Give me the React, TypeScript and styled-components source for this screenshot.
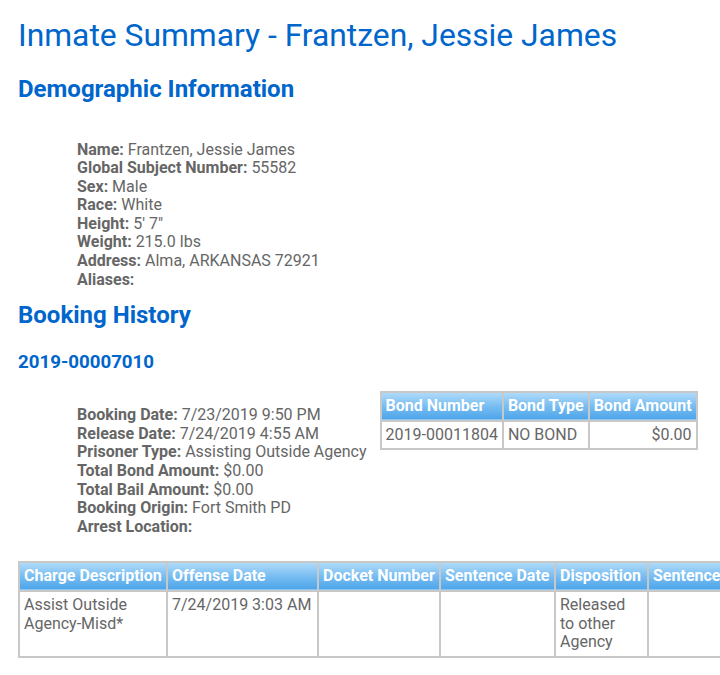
import React from "react";
import styled, { createGlobalStyle } from "styled-components";

const GlobalStyle = createGlobalStyle`
  html, body {
    margin: 0;
    padding: 0;
    background: #ffffff;
    overflow-x: hidden;
  }
  body {
    font-family: Roboto, "Liberation Sans", Arial, sans-serif;
    color: #666666;
  }
`;

const Page = styled.div`
  padding: 17px 0 40px 18px;
  width: 780px;
`;

const Title = styled.h1`
  margin: 0 0 20px 0;
  font-size: 31.8px;
  font-weight: 400;
  line-height: 37.5px;
  color: #0066cc;
`;

const SectionTitle = styled.h2<{ $top?: number }>`
  margin: ${(p) => p.$top ?? 0}px 0 0 0;
  font-size: 24px;
  font-weight: 700;
  line-height: 28px;
  color: #0066cc;
`;

const BookingNumber = styled.h3`
  margin: 22px 0 0 0;
  font-size: 18.7px;
  font-weight: 700;
  line-height: 22px;
  color: #0066cc;
`;

const InfoList = styled.div<{ $top: number }>`
  padding: ${(p) => p.$top}px 0 0 59px;
  font-size: 16px;
  line-height: 18.6px;
  white-space: nowrap;
`;

const InfoRow = styled.div``;

const Label = styled.b`
  font-weight: 700;
`;

const BookingRow = styled.div`
  display: flex;
  align-items: flex-start;
  gap: 13px;
  margin-top: 18px;
`;

const Grid = styled.table`
  border-collapse: separate;
  border-spacing: 2px;
  background: #c8c8c8;
  font-size: 16px;
  line-height: 18.6px;
  color: #666666;
`;

const HeadCell = styled.th<{ $w?: number }>`
  background: linear-gradient(to bottom, #aedaf9 0%, #74bbf1 55%, #4ea5ea 100%);
  border-bottom: 1px solid #8cc6f3;
  color: #ffffff;
  font-weight: 700;
  text-align: left;
  white-space: nowrap;
  padding: 4px 4px 3px 4px;
  width: ${(p) => (p.$w ? `${p.$w}px` : "auto")};
  box-sizing: border-box;
`;

const Cell = styled.td<{ $align?: "left" | "right" }>`
  background: #ffffff;
  vertical-align: top;
  text-align: ${(p) => p.$align ?? "left"};
  padding: 4px 4px;
`;

const NarrowText = styled.div<{ $max: number }>`
  max-width: ${(p) => p.$max}px;
`;

const ChargeWrap = styled.div`
  margin-top: 25px;
`;

const demographics: [string, string][] = [
  ["Name:", "Frantzen, Jessie James"],
  ["Global Subject Number:", "55582"],
  ["Sex:", "Male"],
  ["Race:", "White"],
  ["Height:", "5' 7\""],
  ["Weight:", "215.0 lbs"],
  ["Address:", "Alma, ARKANSAS 72921"],
  ["Aliases:", ""],
];

const booking: [string, string][] = [
  ["Booking Date:", "7/23/2019 9:50 PM"],
  ["Release Date:", "7/24/2019 4:55 AM"],
  ["Prisoner Type:", "Assisting Outside Agency"],
  ["Total Bond Amount:", "$0.00"],
  ["Total Bail Amount:", "$0.00"],
  ["Booking Origin:", "Fort Smith PD"],
  ["Arrest Location:", ""],
];

export default function App() {
  return (
    <>
      <GlobalStyle />
      <Page>
        <Title>Inmate Summary - Frantzen, Jessie James</Title>
        <SectionTitle>Demographic Information</SectionTitle>
        <InfoList $top={38}>
          {demographics.map(([l, v]) => (
            <InfoRow key={l}>
              <Label>{l}</Label> {v}
            </InfoRow>
          ))}
        </InfoList>
        <SectionTitle $top={12}>Booking History</SectionTitle>
        <BookingNumber>2019-00007010</BookingNumber>
        <BookingRow>
          <InfoList $top={15}>
            {booking.map(([l, v]) => (
              <InfoRow key={l}>
                <Label>{l}</Label> {v}
              </InfoRow>
            ))}
          </InfoList>
          <Grid>
            <thead>
              <tr>
                <HeadCell>Bond Number</HeadCell>
                <HeadCell>Bond Type</HeadCell>
                <HeadCell>Bond Amount</HeadCell>
              </tr>
            </thead>
            <tbody>
              <tr>
                <Cell>2019-00011804</Cell>
                <Cell>NO BOND</Cell>
                <Cell $align="right">$0.00</Cell>
              </tr>
            </tbody>
          </Grid>
        </BookingRow>
        <ChargeWrap>
          <Grid>
            <thead>
              <tr>
                <HeadCell $w={146}>Charge Description</HeadCell>
                <HeadCell $w={149}>Offense Date</HeadCell>
                <HeadCell $w={120}>Docket Number</HeadCell>
                <HeadCell $w={113}>Sentence Date</HeadCell>
                <HeadCell $w={91}>Disposition</HeadCell>
                <HeadCell>Sentence Length</HeadCell>
              </tr>
            </thead>
            <tbody>
              <tr>
                <Cell>Assist Outside Agency-Misd*</Cell>
                <Cell>7/24/2019 3:03 AM</Cell>
                <Cell></Cell>
                <Cell></Cell>
                <Cell>
                  <NarrowText $max={76}>Released to other Agency</NarrowText>
                </Cell>
                <Cell></Cell>
              </tr>
            </tbody>
          </Grid>
        </ChargeWrap>
      </Page>
    </>
  );
}
